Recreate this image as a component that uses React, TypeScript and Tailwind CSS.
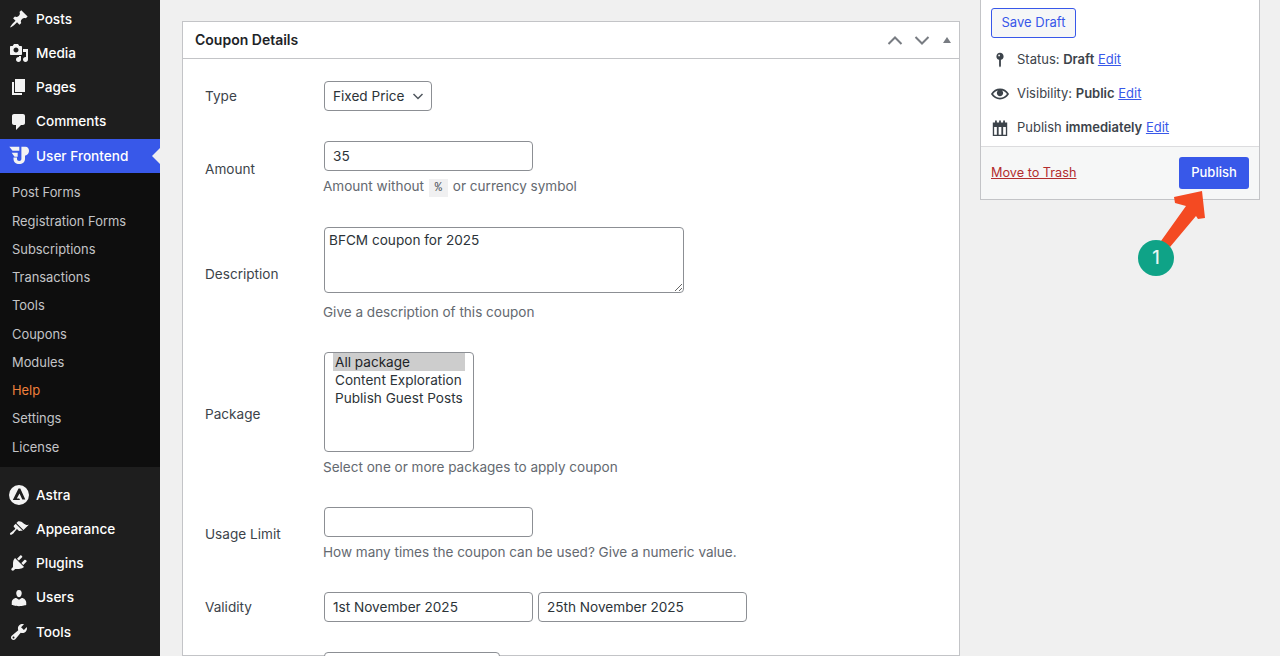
import type { ReactNode } from 'react'

const icons: Record<string, ReactNode> = {
  posts: <path d="M10.44 3.02l1.82-1.82 6.36 6.35-1.83 1.82c-1.05-.68-2.48-.57-3.41.36l-.75.75c-.92.93-1.04 2.35-.35 3.41l-1.83 1.82-2.41-2.41-2.8 2.79c-.42.42-3.38 2.71-3.8 2.29s1.86-3.39 2.28-3.81l2.79-2.79L4.1 9.36l1.83-1.82c1.05.69 2.48.57 3.4-.36l.75-.75c.93-.92 1.05-2.35.36-3.41z" />,
  media: <path d="M13 11V4c0-.55-.45-1-1-1h-1.67L9 1H5L3.67 3H2c-.55 0-1 .45-1 1v7c0 .55.45 1 1 1h10c.55 0 1-.45 1-1zM7 4.5c1.38 0 2.5 1.12 2.5 2.5S8.38 9.5 7 9.5 4.5 8.38 4.5 7 5.62 4.5 7 4.5zM14 6h5v10.5c0 1.38-1.12 2.5-2.5 2.5S14 17.88 14 16.5s1.12-2.5 2.5-2.5c.17 0 .34.02.5.05V9h-3V6zm-4 8.05V13h2v3.5c0 1.38-1.12 2.5-2.5 2.5S7 17.88 7 16.5 8.12 14 9.5 14c.17 0 .34.02.5.05z" />,
  pages: <path d="M6 15V2h10v13H6zm-1 1h8v2H3V5h2v11z" />,
  comments: <path d="M5 2h9c1.1 0 2 .9 2 2v7c0 1.1-.9 2-2 2h-2l-5 5v-5H5c-1.1 0-2-.9-2-2V4c0-1.1.9-2 2-2z" />,
  frontend: (
    <>
      <path d="M0.300 .7H10.300V4.700H3.500z" />
      <path d="M2.700 6.700H8.700V10.700H5.500z" />
      <path d="M4.500 11.500H8V13C8 14.300 9 15 10.200 15S12.400 14.300 12.400 13V.7H16.500C18.700.7 20 2.500 20 4.700S18.500 9.500 16 9.500V13C16 16 13.500 18 10.200 18S4.500 16 4.500 13z" />
    </>
  ),
  astra: <path fillRule="evenodd" d="M10 0a10 10 0 1 0 0 20 10 10 0 0 0 0-20zM9.500 3.500h1.800L16.300 14.500h-3L10.500 8.500 7.800 13.500h2.500l.7 1.500H3.800z" />,
  appearance: <path d="M14.480 11.060L7.410 3.990l1.500-1.500c.5-.56 2.300-.47 3.510.32 1.210.8 1.430 1.280 2.910 2.100 1.180.64 2.450 1.260 4.450.85zm-.71.71L6.700 4.700 4.930 6.470c-.39.39-.39 1.020 0 1.410l1.060 1.060c.39.39.39 1.030 0 1.420-.6.6-1.430 1.110-2.210 1.690-.35.26-.7.53-1.010.84C1.430 13.230.4 14.740 1.150 15.500c.75.76 2.270-.28 3.610-1.620.31-.31.58-.66.84-1.010.58-.78 1.090-1.610 1.690-2.210.39-.39 1.020-.39 1.410 0l1.060 1.060c.39.39 1.020.39 1.410 0z" />,
  plugins: <path d="M13.110 4.360L9.870 7.600 8 5.730l3.240-3.240c.35-.34 1.050-.2 1.560.32.52.51.66 1.210.31 1.550zm-8 1.770l.91-1.120 9.010 9.010-1.190.84c-.71.71-2.630 1.160-3.820 1.160H6.140L4.900 17.260c-.59.59-1.540.59-2.120 0-.59-.58-.59-1.530 0-2.120l1.240-1.240v-3.880c0-1.130.4-3.190 1.090-3.890zm7.260 3.970l3.240-3.240c.34-.35 1.040-.21 1.550.31.52.51.66 1.210.31 1.550l-3.240 3.250z" />,
  users: <path d="M10 9.250c-2.270 0-2.730-3.440-2.730-3.440C7 4.020 7.820 2 9.970 2c2.160 0 2.980 2.020 2.710 3.810 0 0-.41 3.440-2.680 3.440zm0 2.570L12.720 10c2.390 0 4.520 2.330 4.520 4.530v2.490s-3.650 1.130-7.240 1.130c-3.650 0-7.240-1.130-7.240-1.130v-2.490c0-2.250 1.940-4.480 4.470-4.480z" />,
  tools: <path d="M16.680 9.770c-1.340 1.340-3.300 1.670-4.950.99l-5.410 6.520c-.99.99-2.590.99-3.580 0s-.99-2.590 0-3.570l6.520-5.420c-.68-1.650-.35-3.610.99-4.950 1.280-1.280 3.120-1.620 4.720-1.060l-2.890 2.890 2.820 2.820 2.860-2.870c.53 1.580.18 3.390-1.080 4.650zM3.810 16.210c.4.39 1.040.39 1.430 0 .4-.4.4-1.040 0-1.430-.39-.4-1.030-.4-1.430 0-.39.39-.39 1.030 0 1.430z" />,
  status: <path fillRule="evenodd" d="M14 6c0 1.860-1.280 3.410-3 3.860V16c0 1-1 2-1 2s-1-1-1-2V9.860c-1.720-.45-3-2-3-3.860 0-2.210 1.790-4 4-4s4 1.790 4 4zM8 5c0 .55.45 1 1 1s1-.45 1-1-.45-1-1-1-1 .45-1 1z" />,
  visibility: <path d="M19.700 9.400C17.700 6 14 3.900 10 3.900S2.300 6 .3 9.400L0 10l.3.6c2 3.400 5.700 5.500 9.700 5.500s7.700-2.100 9.700-5.500l.3-.6-.3-.6zM10 14.100c-3.100 0-6-1.600-7.700-4.100C3.600 8 5.700 6.600 8 6.100c-.9.6-1.500 1.700-1.500 2.900 0 1.900 1.600 3.500 3.500 3.500s3.500-1.600 3.500-3.500c0-1.200-.6-2.300-1.500-2.900 2.300.5 4.400 1.900 5.700 3.900-1.700 2.500-4.600 4.100-7.700 4.100z" />,
  calendar: <path fillRule="evenodd" d="M2 4h2.500V2.500a1 1 0 0 1 2 0V4h2.500V2.500a1 1 0 0 1 2 0V4h2.500V2.500a1 1 0 0 1 2 0V4H18v15H2zM3.500 9v8.500h3V9zm5 0v8.500h3V9zm5 0v8.500h3V9z" />,
}

function Icon({ name, className }: { name: string; className: string }) {
  return (
    <svg viewBox="0 0 20 20" fill="currentColor" className={className}>
      {icons[name]}
    </svg>
  )
}

function MenuItem({ icon, label, active }: { icon: string; label: string; active?: boolean }) {
  return (
    <div className={`relative flex h-[34.2px] items-center ${active ? 'bg-[#3858e9]' : ''}`}>
      <div className="flex w-9 justify-center pl-px">
        <Icon name={icon} className="h-5 w-5 text-[#f3f3f3]" />
      </div>
      <span className="text-[13.6px] font-medium text-white">{label}</span>
      {active && (
        <div className="absolute right-0 top-1/2 h-0 w-0 -translate-y-1/2 border-y-[8px] border-r-[8px] border-y-transparent border-r-[#f0f0f0]" />
      )}
    </div>
  )
}

const topItems = [
  { icon: 'posts', label: 'Posts' },
  { icon: 'media', label: 'Media' },
  { icon: 'pages', label: 'Pages' },
  { icon: 'comments', label: 'Comments' },
]

const subItems = [
  'Post Forms',
  'Registration Forms',
  'Subscriptions',
  'Transactions',
  'Tools',
  'Coupons',
  'Modules',
  'Help',
  'Settings',
  'License',
]

const bottomItems = [
  { icon: 'astra', label: 'Astra' },
  { icon: 'appearance', label: 'Appearance' },
  { icon: 'plugins', label: 'Plugins' },
  { icon: 'users', label: 'Users' },
  { icon: 'tools', label: 'Tools' },
]

function Sidebar() {
  return (
    <aside className="w-40 shrink-0 overflow-hidden bg-[#1e1e1e] pt-[2px]">
      {topItems.map((item) => (
        <MenuItem key={item.label} {...item} />
      ))}
      <MenuItem icon="frontend" label="User Frontend" active />
      <div className="bg-[#0e0e0e] pb-[5.5px] pt-[6px]">
        {subItems.map((label) => (
          <div
            key={label}
            className={`flex h-[28.25px] items-center pl-3 text-[12.9px] ${label === 'Help' ? 'text-[#f0803c]' : 'text-[#c3c4c7]'}`}
          >
            {label}
          </div>
        ))}
      </div>
      <div className="mt-[11px]">
        {bottomItems.map((item) => (
          <MenuItem key={item.label} {...item} />
        ))}
      </div>
    </aside>
  )
}

function Row({ label, children }: { label: string; children: ReactNode }) {
  return (
    <div className="flex items-center">
      <div className="w-[141px] shrink-0 pl-[22px] text-[13.6px] text-[#3c434a]">{label}</div>
      <div>{children}</div>
    </div>
  )
}

function TextInput({ value, width }: { value: string; width: string }) {
  return (
    <input
      readOnly
      value={value}
      className={`block h-[30px] ${width} rounded-[4px] border border-[#8c8f94] bg-white px-2 text-[13.6px] text-[#2c3338]`}
    />
  )
}

function Help({ children }: { children: ReactNode }) {
  return <p className="-ml-px mt-[5px] h-[20px] text-[13.55px] leading-5 text-[#646970]">{children}</p>
}

function CouponDetails() {
  return (
    <section className="ml-[22px] mt-[21px] w-[778px] shrink-0 border border-[#c3c4c7] bg-white">
      <header className="flex h-[37px] items-center justify-between border-b border-[#c3c4c7] pl-3 pr-[7px]">
        <h2 className="text-sm font-semibold text-[#1d2327]">Coupon Details</h2>
        <div className="flex items-center gap-[7px] text-[#787c82]">
          <svg viewBox="0 0 20 20" className="h-5 w-5" fill="none" stroke="currentColor" strokeWidth="2">
            <path d="M3.500 14l6.500-6.500 6.500 6.500" />
          </svg>
          <svg viewBox="0 0 20 20" className="h-5 w-5" fill="none" stroke="currentColor" strokeWidth="2">
            <path d="M3.500 7l6.500 6.500L16.500 7" />
          </svg>
          <div className="ml-1 mr-[1px] h-0 w-0 border-x-[4px] border-b-[6px] border-x-transparent border-b-[#787c82]" />
        </div>
      </header>
      <div className="flex flex-col gap-[30px] pt-[22px]">
        <Row label="Type">
          <div className="flex h-[30px] w-[108px] items-center justify-between rounded-[4px] border border-[#8c8f94] pl-2 pr-[7px] text-[13.6px] text-[#2c3338]">
            Fixed Price
            <svg viewBox="0 0 12 12" className="h-3 w-3" fill="none" stroke="#50575e" strokeWidth="1.500">
              <path d="M1.500 4l4.500 4.500L10.500 4" />
            </svg>
          </div>
        </Row>
        <Row label="Amount">
          <TextInput value="35" width="w-[209px]" />
          <div className="pb-px">
            <Help>
              Amount without <code className="mx-px bg-[#f0f0f1] px-[6px] py-[2px] font-['Liberation_Mono',monospace] text-[12px] text-[#50575e]">%</code> or currency symbol
            </Help>
          </div>
        </Row>
        <Row label="Description">
          <div className="pb-1">
            <textarea
              readOnly
              value="BFCM coupon for 2025"
              className="block h-[66px] w-[360px] rounded-[4px] border border-[#8c8f94] bg-white px-1 py-[2px] text-[13.6px] text-[#2c3338]"
            />
          </div>
          <Help>Give a description of this coupon</Help>
        </Row>
        <Row label="Package">
          <div className="h-[100px] w-[150px] whitespace-nowrap rounded-[4px] border border-[#8c8f94] px-2 text-[13.6px] leading-[18px] text-[#2c3338]">
            <div className="bg-[#cdcdcd] px-[2px] text-[#1d2327]">All package</div>
            <div className="px-[2px]">Content Exploration</div>
            <div className="px-[2px]">Publish Guest Posts</div>
          </div>
          <Help>Select one or more packages to apply coupon</Help>
        </Row>
        <Row label="Usage Limit">
          <TextInput value="" width="w-[209px]" />
          <Help>How many times the coupon can be used? Give a numeric value.</Help>
        </Row>
        <Row label="Validity">
          <div className="flex gap-[5px]">
            <TextInput value="1st November 2025" width="w-[209px]" />
            <TextInput value="25th November 2025" width="w-[209px]" />
          </div>
        </Row>
        <Row label="">
          <TextInput value="" width="w-[176px]" />
        </Row>
      </div>
    </section>
  )
}

function PublishRow({ icon, children }: { icon: string; children: ReactNode }) {
  return (
    <div className="flex h-[34px] items-center text-[13px] text-[#3c434a]">
      <div className="flex w-[26px] justify-start">
        <Icon name={icon} className="h-[18px] w-[18px] text-[#3c434a]" />
      </div>
      <span>{children}</span>
    </div>
  )
}

function PublishBox() {
  return (
    <section className="ml-5 h-[200px] w-[280px] shrink-0 border-x border-b border-[#c3c4c7] bg-white">
      <div className="h-[146px] px-[10px] pt-2">
        <button className="h-[30px] w-[85px] rounded-[3px] border border-[#3858e9] bg-[#f6f7f7] text-[13px] text-[#3858e9]">
          Save Draft
        </button>
        <div className="mt-[5px]">
          <PublishRow icon="status">
            Status: <b className="font-semibold">Draft</b> <a className="text-[#3858e9] underline">Edit</a>
          </PublishRow>
          <PublishRow icon="visibility">
            Visibility: <b className="font-semibold">Public</b> <a className="text-[#3858e9] underline">Edit</a>
          </PublishRow>
          <PublishRow icon="calendar">
            Publish <b className="font-semibold">immediately</b> <a className="text-[#3858e9] underline">Edit</a>
          </PublishRow>
        </div>
      </div>
      <div className="flex h-[53px] items-center justify-between border-t border-[#dcdcde] bg-[#f6f7f7] pl-[10px] pr-[10px]">
        <a className="text-[12.7px] text-[#b32d2e] underline">Move to Trash</a>
        <button className="h-[32px] w-[70px] rounded-[3px] bg-[#3858e9] text-[13px] font-medium text-white">Publish</button>
      </div>
    </section>
  )
}

export default function App() {
  return (
    <div className="relative flex h-[656px] w-[1280px] overflow-hidden bg-[#f0f0f0] font-['Inter',sans-serif]">
      <Sidebar />
      <CouponDetails />
      <PublishBox />
      {/* annotation over the publish button */}
      <svg className="pointer-events-none absolute inset-0 h-full w-full" viewBox="0 0 1280 656">
        <polygon points="1202,191 1174,197 1175,203 1186,206 1161,241 1170,247 1196,216 1198,219 1205,218" fill="#f44a22" />
      </svg>
      <div className="absolute left-[1138px] top-[240px] flex h-9 w-9 items-center justify-center rounded-full bg-[#0fa387] text-lg font-medium text-[#e8f6f3]">
        1
      </div>
    </div>
  )
}
